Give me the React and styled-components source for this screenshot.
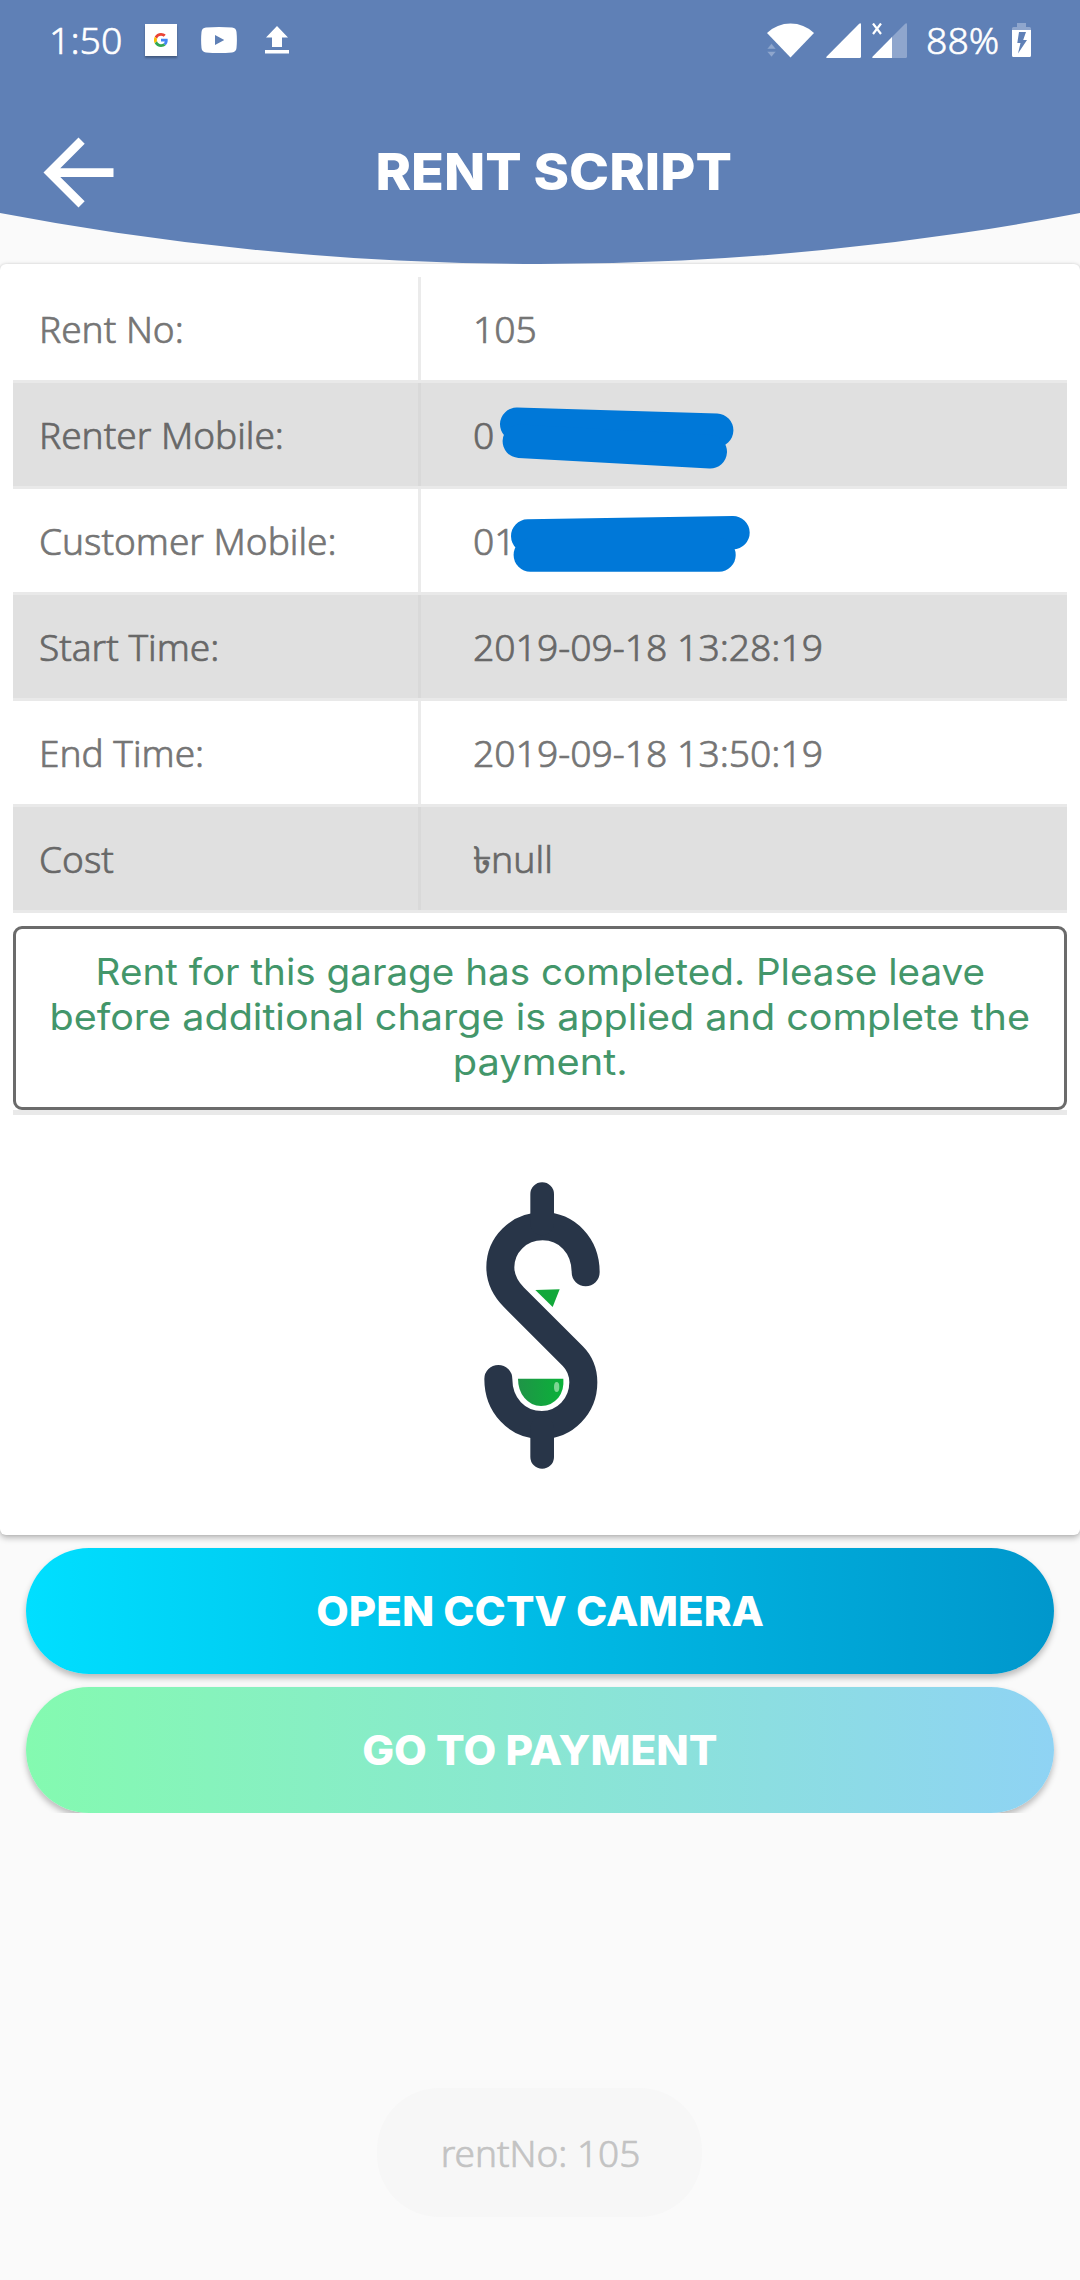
import React from "react";
import styled, { createGlobalStyle } from "styled-components";

const GlobalStyle = createGlobalStyle`
  * { box-sizing: border-box; }
  body {
    margin: 0;
    background: #fafafa;
    font-family: "Noto Sans", "Open Sans", sans-serif;
  }
  svg { display: block; flex: none; }
`;

const Screen = styled.div`
  position: relative;
  width: 1080px;
  height: 2280px;
  overflow: hidden;
  background: #fafafa;
`;

const Header = styled.header`
  height: 264px;
  background: #5f80b6;
  clip-path: circle(2885px at 50% -2621px);
  color: #fff;
`;

const StatusBar = styled.div`
  display: flex;
  justify-content: space-between;
  height: 80px;
  padding: 0 49px;
`;

const StatusGroup = styled.div`
  display: flex;
  align-items: center;
  gap: ${(p) => p.$gap}px;
`;

const StatusText = styled.span`
  width: ${(p) => p.$width}px;
  padding-left: ${(p) => p.$inset || 0}px;
  font-size: 37.5px;
  font-weight: 300;
  line-height: 44px;
  white-space: nowrap;
  -webkit-text-stroke: 0.6px currentColor;
`;

const AppIcon = styled.div`
  display: flex;
  align-items: center;
  justify-content: center;
  width: 32px;
  height: 32px;
  background: #fff;
  box-shadow: 0 2px 2px rgba(0, 0, 0, 0.3);
`;

const TitleBar = styled.div`
  display: flex;
  align-items: center;
  height: 184px;
  padding: 0 103px 0 26px;
`;

const Title = styled.h1`
  flex: 1;
  margin: 0;
  font-family: Inter, sans-serif;
  font-size: 51px;
  font-weight: 800;
  line-height: 60px;
  text-align: center;
`;

const Wide = styled.span`
  display: inline-block;
  transform: scaleX(${(p) => p.$stretch});
`;

const Card = styled.main`
  height: 1271px;
  padding: 13px;
  border-radius: 6px;
  background: #fff;
  box-shadow: 0 3px 6px rgba(0, 0, 0, 0.26), 0 0 3px rgba(0, 0, 0, 0.12);
`;

const Row = styled.div`
  display: grid;
  grid-template-columns: 405px 3px 1fr;
  height: 106px;
  border-bottom: 3px solid #e9e9e9;
  background: ${(p) => (p.$shaded ? "#e0e0e0" : "#fff")};
  color: ${(p) => (p.$shaded ? "#686868" : "#757575")};
`;

const Cell = styled.div`
  position: relative;
  display: flex;
  align-items: center;
  padding-left: ${(p) => p.$inset}px;
  font-size: ${(p) => p.$size}px;
  font-weight: 300;
  line-height: 50px;
  -webkit-text-stroke: 0.7px currentColor;
`;

const Separator = styled.div`
  background: ${(p) => (p.$shaded ? "#d9d9d9" : "#ebebeb")};
`;

const Scribble = styled.svg`
  position: absolute;
  left: 59px;
  top: 0;
`;

const Notice = styled.div`
  height: 184px;
  margin-top: 13px;
  padding-top: 21px;
  border: 3px solid #6b6b6b;
  border-radius: 9px;
  color: #43966a;
  font-family: Inter, sans-serif;
  font-size: 36.5px;
  line-height: 45px;
  text-align: center;
`;

const NoticeLine = styled.div`
  height: 45px;
  white-space: nowrap;
`;

const Rule = styled.div`
  height: 5px;
  background: #e9e9e9;
`;

const Artwork = styled.div`
  display: flex;
  justify-content: center;
  padding-top: 45px;
`;

const Actions = styled.div`
  display: flex;
  flex-direction: column;
  gap: 13px;
  padding: 13px 26px 0;
  overflow: hidden;
`;

const Button = styled.button`
  height: 126px;
  border: 0;
  border-radius: 63px;
  background: linear-gradient(90deg, ${(p) => p.$from}, ${(p) => p.$to});
  box-shadow: 0 4px 6px rgba(0, 0, 0, 0.26);
  color: #fff;
  font-family: Inter, sans-serif;
  font-size: 41px;
  font-weight: 800;
`;

const Toast = styled.div`
  position: absolute;
  left: 377px;
  bottom: 63px;
  display: flex;
  align-items: center;
  justify-content: center;
  width: 325px;
  height: 129px;
  padding-left: 2px;
  border-radius: 62px;
  background: #f7f7f7;
  color: #c3c3c3;
  font-size: 37px;
  font-weight: 300;
  -webkit-text-stroke: 0.7px currentColor;
`;

const rows = [
  { label: "Rent No:", value: "105" },
  {
    label: "Renter Mobile:",
    value: "0",
    strokes: ["M26.7 41.3L226.7 47.3", "M29.3 58.3L220.3 68.7"],
  },
  {
    label: "Customer Mobile:",
    value: "01",
    strokes: ["M37.7 47L243 43.7", "M40.3 66H229"],
  },
  { label: "Start Time:", value: "2019-09-18 13:28:19" },
  { label: "End Time:", value: "2019-09-18 13:50:19" },
  { label: "Cost", value: "৳null" },
];

const noticeLines = [
  { text: "Rent for this garage has completed. Please leave", stretch: 1.058 },
  { text: "before additional charge is applied and complete the", stretch: 1.083 },
  { text: "payment.", stretch: 1.09 },
];

function GoogleMark() {
  return (
    <svg width="14" height="14" viewBox="0 0 48 48">
      <path fill="#EA4335" d="M24 9.5c3.5 0 6.700 1.200 9.200 3.600l6.900-6.900C35.900 2.400 30.500 0 24 0 14.600 0 6.500 5.400 2.600 13.200l8 6.200C12.400 13.700 17.700 9.500 24 9.500z" />
      <path fill="#4285F4" d="M47 24.600c0-1.600-.200-3.100-.400-4.600H24v9h12.900c-.600 3-2.300 5.500-4.800 7.200l7.700 6C44.400 38 47 31.900 47 24.600z" />
      <path fill="#FBBC05" d="M10.500 28.600a14.500 14.500 0 0 1 0-9.200l-8-6.200a24 24 0 0 0 0 21.600l8-6.200z" />
      <path fill="#34A853" d="M24 48c6.500 0 11.900-2.100 15.900-5.800l-7.700-6c-2.200 1.500-4.900 2.300-8.200 2.300-6.300 0-11.600-4.200-13.500-9.900l-8 6.200C6.500 42.600 14.600 48 24 48z" />
    </svg>
  );
}

function VideoIcon() {
  return (
    <svg width="36" height="26" viewBox="0 0 36 26">
      <path
        fill="#fff"
        fillRule="evenodd"
        d="M5 .6Q18-.4 31 .6 35.200 1 35.500 5 36.300 13 35.500 21 35.200 25 31 25.400 18 26.400 5 25.400.8 25 .5 21-.3 13 .5 5 .8 1 5 .6ZM14 8V18L23.300 13Z"
      />
    </svg>
  );
}

function UploadIcon() {
  return (
    <svg width="24" height="28" viewBox="0 0 24 28">
      <path fill="#fff" d="M12 0L23 11.500H17V21H7V11.500H1ZM0 24H24V27.500H0Z" />
    </svg>
  );
}

function WifiIcon() {
  return (
    <svg width="47" height="35" viewBox="0 0 47 35">
      <path fill="#fff" d="M0 10Q10 .5 23.500 .5T47 10L23.500 34.500Z" />
      <path fill="#8fa6cd" stroke="#5f80b6" strokeWidth="0.500" d="M0 26L4.500 20.500 9 26ZM0 28.500H9L4.500 34Z" />
    </svg>
  );
}

function SignalIcon() {
  return (
    <svg width="35" height="35" viewBox="0 0 35 35">
      <path fill="#fff" d="M33.200.7Q35-.5 35 1.500V33.500Q35 35 33.500 35H1.500Q-.5 35 .7 33.500Z" />
    </svg>
  );
}

function WeakSignalIcon() {
  return (
    <svg width="35" height="35" viewBox="0 0 35 35">
      <path fill="#8fa6cd" d="M33.200.7Q35-.5 35 1.500V33.500Q35 35 33.500 35H19V15Z" />
      <path fill="#fff" d="M20 14V35H1.500Q-.5 35 .7 33.500Z" />
      <path fill="none" stroke="#fff" strokeWidth="2.200" d="M1 .5L9 11M9 .5L1 11" />
    </svg>
  );
}

function BatteryIcon() {
  return (
    <svg width="19" height="34" viewBox="0 0 19 34">
      <path fill="#8fa6cd" d="M5 0H14V4H17.500Q19 4 19 5.500V8H0V5.500Q0 4 1.500 4H5Z" />
      <path
        fill="#fff"
        fillRule="evenodd"
        d="M0 7H19V32.500Q19 34 17.500 34H1.500Q0 34 0 32.500ZM7 9L5.300 20H8.500L6 30.500 15 17H11.200L14 9Z"
      />
    </svg>
  );
}

function BackIcon() {
  return (
    <svg width="105" height="105" viewBox="0 0 24 24">
      <path fill="#fff" d="M20 11H7.830l5.590-5.590L12 4l-8 8 8 8 1.410-1.410L7.830 13H20v-2z" />
    </svg>
  );
}

function DollarArt() {
  return (
    <svg width="200" height="330" viewBox="0 0 600 990">
      <defs>
        <linearGradient id="liquid">
          <stop offset="0" stopColor="#1f9447" />
          <stop offset="1" stopColor="#0ab239" />
        </linearGradient>
      </defs>
      <path
        fill="none"
        stroke="#283548"
        strokeWidth="84"
        strokeLinecap="round"
        d="M437 337C437 257 381 199 308 199C235 199 181 255 181 322C181 360 197 387 222 412L398 588C420 610 430 635 430 667C430 738 375 795 306 795C230 795 175 735 175 657"
      />
      <path
        fill="none"
        stroke="#283548"
        strokeWidth="71"
        strokeLinecap="round"
        d="M306.500 102.500V190M306.500 805V891"
      />
      <path fill="#12a83a" d="M286 390L359 388 338 441Z" />
      <path fill="url(#liquid)" d="M234 656H370Q373 690 355 713 334 738 303 738 274 738 253 713 234 690 234 656Z" />
      <ellipse cx="350" cy="681" rx="8" ry="15" fill="#7dd692" />
    </svg>
  );
}

export default function App() {
  return (
    <>
      <GlobalStyle />
      <Screen>
        <Header>
          <StatusBar>
            <StatusGroup $gap={0}>
              <StatusText $width={96}>1:50</StatusText>
              <StatusGroup $gap={24}>
                <AppIcon>
                  <GoogleMark />
                </AppIcon>
                <StatusGroup $gap={28}>
                  <VideoIcon />
                  <UploadIcon />
                </StatusGroup>
              </StatusGroup>
            </StatusGroup>
            <StatusGroup $gap={16}>
              <StatusGroup $gap={12}>
                <WifiIcon />
                <StatusGroup $gap={11}>
                  <SignalIcon />
                  <WeakSignalIcon />
                </StatusGroup>
              </StatusGroup>
              <StatusGroup $gap={0}>
                <StatusText $width={89} $inset={3}>88%</StatusText>
                <BatteryIcon />
              </StatusGroup>
            </StatusGroup>
          </StatusBar>
          <TitleBar>
            <BackIcon />
            <Title>
              <Wide $stretch={1.057}>RENT SCRIPT</Wide>
            </Title>
          </TitleBar>
        </Header>

        <Card>
          {rows.map((row, i) => {
            const shaded = i % 2 === 1;
            return (
              <Row key={row.label} $shaded={shaded}>
                <Cell $inset={26} $size={37}>{row.label}</Cell>
                <Separator $shaded={shaded} />
                <Cell $inset={52} $size={37.3}>
                  {row.value}
                  {row.strokes && (
                    <Scribble width="270" height="103" viewBox="-10 0 270 103">
                      {row.strokes.map((d) => (
                        <path key={d} d={d} stroke="#0078d8" strokeWidth="33.400" strokeLinecap="round" />
                      ))}
                    </Scribble>
                  )}
                </Cell>
              </Row>
            );
          })}
          <Notice>
            {noticeLines.map((line) => (
              <NoticeLine key={line.text}>
                <Wide $stretch={line.stretch}>{line.text}</Wide>
              </NoticeLine>
            ))}
          </Notice>
          <Rule />
          <Artwork>
            <DollarArt />
          </Artwork>
        </Card>

        <Actions>
          <Button $from="#00dfff" $to="#0097cc">
            <Wide $stretch={1.026}>OPEN CCTV CAMERA</Wide>
          </Button>
          <Button $from="#84fab0" $to="#8fd3f4">
            <Wide $stretch={1.034}>GO TO PAYMENT</Wide>
          </Button>
        </Actions>

        <Toast>rentNo: 105</Toast>
      </Screen>
    </>
  );
}
